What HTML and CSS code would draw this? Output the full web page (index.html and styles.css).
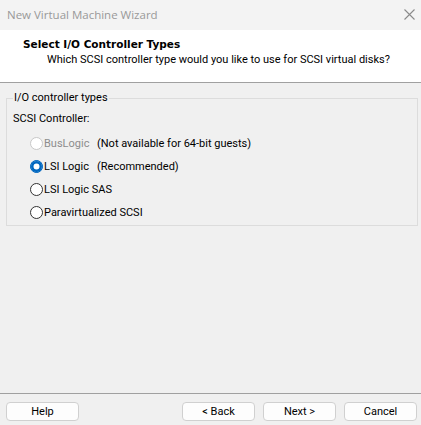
FILE: index.html
```html
<!DOCTYPE html>
<html>
<head>
<meta charset="utf-8">
<link rel="stylesheet" href="styles.css">
</head>
<body>
<div class="window">
  <div class="titlebar">
    <span class="title">New Virtual Machine Wizard</span>
    <svg class="close" width="11" height="11" viewBox="0 0 11 11"><path d="M0.5 0.5 L10.5 10.5 M10.5 0.5 L0.5 10.5" stroke="#8a8a8a" stroke-width="1.1" fill="none"/></svg>
  </div>
  <div class="header">
    <div class="h-title">Select I/O Controller Types</div>
    <div class="h-sub">Which SCSI controller type would you like to use for SCSI virtual disks?</div>
  </div>
  <div class="content">
    <fieldset class="group">
      <legend>I/O controller types</legend>
      <div class="label">SCSI Controller:</div>
      <div class="radios">
        <div class="row disabled"><span class="radio"></span><span class="name">BusLogic</span><span class="note">(Not available for 64-bit guests)</span></div>
        <div class="row"><span class="radio checked"></span><span class="name">LSI Logic</span><span class="note">(Recommended)</span></div>
        <div class="row"><span class="radio"></span><span class="name">LSI Logic SAS</span></div>
        <div class="row"><span class="radio"></span><span class="name">Paravirtualized SCSI</span></div>
      </div>
    </fieldset>
  </div>
  <div class="footer">
    <button class="btn">Help</button>
    <div class="spacer"></div>
    <button class="btn">&lt; Back</button>
    <button class="btn">Next &gt;</button>
    <button class="btn">Cancel</button>
  </div>
</div>
</body>
</html>
```
FILE: styles.css
```css
html, body {
  margin: 0;
  padding: 0;
}
body {
  width: 421px;
  height: 425px;
  overflow: hidden;
  background: #f0f0f0;
  font-family: Roboto, "Open Sans", sans-serif;
  font-size: 11px;
  color: #000;
}
.window {
  display: flex;
  flex-direction: column;
  height: 425px;
}
.titlebar {
  height: 30px;
  flex: none;
  background: #f3f3f3;
  display: flex;
  align-items: center;
  justify-content: space-between;
  padding: 0 6px 0 7px;
}
.title {
  color: #999;
  font-family: "Open Sans", sans-serif;
  font-size: 11.5px;
  margin-top: -2px;
}
.close {
  margin-top: -2px;
}
.header {
  flex: none;
  background: #fff;
  border-bottom: 1px solid #a0a0a0;
  box-sizing: border-box;
  height: 53px;
  padding: 7px 0 0 23px;
}
.h-title {
  font-family: "DejaVu Sans", sans-serif;
  font-weight: bold;
  font-size: 10.5px;
  line-height: 15px;
}
.h-sub {
  padding-left: 24px;
  line-height: 16px;
  color: #000;
}
.content {
  flex: 1;
  padding: 8px 3px 0 6px;
}
.group {
  margin: 0;
  border: 1px solid #dcdcdc;
  padding: 0 0 1px 6px;
  min-width: 0;
}
.group legend {
  padding: 0 1px;
  margin-left: 0;
  line-height: 14px;
}
.label {
  margin-top: 6px;
  line-height: 16px;
}
.radios {
  padding-left: 17px;
  margin-top: 5px;
}
.row {
  display: flex;
  align-items: center;
  height: 23px;
}
.radio {
  width: 13px;
  height: 13px;
  box-sizing: border-box;
  border: 1px solid #333;
  border-radius: 50%;
  background: #fff;
  flex: none;
  margin-right: 1px;
}
.radio.checked {
  background: #0067c0;
  border-color: #0067c0;
  box-shadow: inset 0 0 0 2.5px #0067c0, inset 0 0 0 6px #fff;
}
.row.disabled .radio {
  border-color: #c8c8c8;
}
.row.disabled .name {
  color: #8d8d8d;
}
.name {
  width: 53px;
  white-space: nowrap;
}
.note {
  white-space: nowrap;
}
.footer {
  flex: none;
  border-top: 1px solid #a0a0a0;
  height: 32px;
  box-sizing: border-box;
  display: flex;
  align-items: flex-start;
  padding: 8px 4px 0 6px;
  gap: 8px;
}
.spacer {
  flex: 1;
}
.btn {
  width: 73px;
  height: 19px;
  margin: 0;
  padding: 0;
  background: #fdfdfd;
  border: 1px solid #d0d0d0;
  border-radius: 4px;
  font-family: Roboto, "Open Sans", sans-serif;
  font-size: 11px;
  color: #000;
}
```
